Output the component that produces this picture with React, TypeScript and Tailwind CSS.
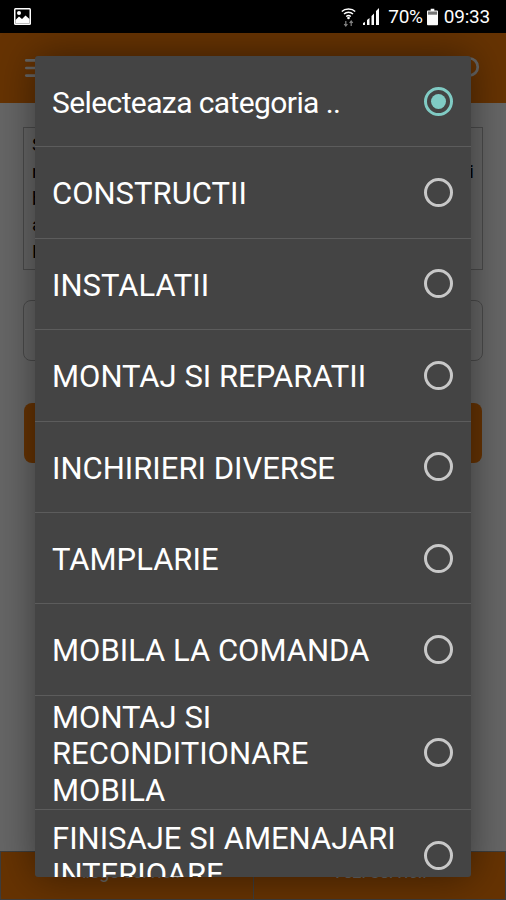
import React from "react";
import { Menu, Search } from "lucide-react";

const CATEGORIES = [
  "Selecteaza categoria ..",
  "CONSTRUCTII",
  "INSTALATII",
  "MONTAJ SI REPARATII",
  "INCHIRIERI DIVERSE",
  "TAMPLARIE",
  "MOBILA LA COMANDA",
  "MONTAJ SI RECONDITIONARE MOBILA",
  "FINISAJE SI AMENAJARI INTERIOARE",
];

// mostly hidden by the dialog, only the line starts show
const INTRO_LINES = [
  "Selecteaza categoria de servicii dorita",
  "necesare pentru a primi oferte de la meseriasi",
  "buni din zona ta pentru lucrarea",
  "ai nevoie acum si compara",
  "Preturile",
];

function StatusBar() {
  return (
    <div className="flex h-[33px] shrink-0 items-center justify-between bg-black pl-[14px] pr-[16px] text-white">
      <svg width="17" height="17" viewBox="0 0 17 17">
        <rect width="17" height="17" rx="1.5" fill="#fff" />
        <rect x="1.5" y="1.5" width="14" height="14" fill="#000" />
        <circle cx="5" cy="5" r="2" fill="#fff" />
        <path d="M1.5 15.5 V12 L5 8.5 L8 11 L11.5 7.5 L15.5 11 V15.5 Z" fill="#fff" />
      </svg>
      <div className="flex items-center text-[19px] leading-none">
        <svg width="15" height="20" viewBox="0 0 15 20" className="mr-[7px]">
          <path d="M0.8 4.5 C4 1.2 11 1.2 14.2 4.5 M3 7 C5.5 4.6 9.5 4.6 12 7 M5.2 9.5 C6.5 8.3 8.5 8.3 9.8 9.5" fill="none" stroke="#fff" strokeWidth="1.4" />
          <circle cx="7.5" cy="11" r="1.3" fill="#fff" />
          <path d="M4.8 14 V19 M3.2 17 L4.8 19 L6.4 17 M10.2 19 V14 M8.6 16 L10.2 14 L11.8 16" fill="none" stroke="#888" strokeWidth="1.2" />
        </svg>
        <svg width="16" height="17" viewBox="0 0 16 17" className="mr-[9px]">
          <path d="M0 17 V15 L2 14 V17 Z M4 17 V12 L6.5 10 V17 Z M8.5 17 V8 L11 5.5 V17 Z M13 17 V3 L16 0 V17 Z" fill="#fff" />
        </svg>
        <span className="tracking-[-0.3px]">70%</span>
        <svg width="11" height="18" viewBox="0 0 12 18" className="ml-[4px] mr-[6px]">
          <path d="M4 0 H8 V2 H11 Q12 2 12 3 V17 Q12 18 11 18 H1 Q0 18 0 17 V3 Q0 2 1 2 H4 Z" fill="#fff" />
          <rect x="1" y="3" width="10" height="3.5" fill="#777" />
        </svg>
        <span className="tracking-[-0.2px]">09:33</span>
      </div>
    </div>
  );
}

function PageBehind() {
  return (
    <div className="flex min-h-0 flex-1 flex-col bg-white">
      <div className="flex h-[70px] shrink-0 items-center justify-between bg-[#fe8008] pl-[22px] pr-[25px]">
        <Menu size={26} color="#fff" strokeWidth={2.5} />
        <Search size={26} color="#fff" strokeWidth={2.5} className="-scale-x-100" />
      </div>

      <div className="flex flex-1 flex-col px-[23px] pt-[24px]">
        <div className="h-[143px] border border-[#bbb] px-[8px] pt-[4px] text-[19px] leading-[26.8px] text-black">
          {INTRO_LINES.map((line, i) => (
            <div key={line} className={i === 1 ? "[text-align-last:justify]" : ""}>{line}</div>
          ))}
        </div>
        <div className="mt-[30px] h-[61px] rounded-[8px] border border-[#bbb]" />
        <div className="mx-[1px] mt-[42px] h-[60px] rounded-[8px] bg-[#fe8008]" />
      </div>

      <div className="flex h-[49px] shrink-0 border border-[#999] bg-[#fe8008] text-[18px] text-white">
        <div className="flex flex-1 items-center justify-center border-r border-[#999] pb-[9px]">Alege servicii</div>
        <div className="flex flex-1 items-center justify-center pb-[9px]">Vezi servicii</div>
      </div>
    </div>
  );
}

function Radio({ checked }: { checked: boolean }) {
  return (
    <span
      className={
        "flex h-[29px] w-[29px] shrink-0 items-center justify-center rounded-full border-[3px] " +
        (checked ? "border-[#80cbc4]" : "border-[#c8c8c8]")
      }
    >
      {checked && <span className="h-[15px] w-[15px] rounded-full bg-[#80cbc4]" />}
    </span>
  );
}

export default function App() {
  return (
    <div className="relative flex h-[900px] w-full flex-col overflow-hidden font-['Roboto',sans-serif]">
      <StatusBar />
      <PageBehind />

      <div className="absolute inset-x-0 bottom-0 top-[33px] flex items-center justify-center bg-black/60">
        <div className="h-[821px] w-[436px] overflow-hidden rounded-[3px] bg-[#444444] shadow-[0_0_40px_rgba(0,0,0,0.45)]">
          {CATEGORIES.map((name, i) => (
            <div
              key={name}
              className="flex min-h-[91.4px] items-center border-b border-[#5c5c5c] pl-[17px] pr-[18px]"
            >
              <span
                className={
                  "flex-1 pr-[14px] pt-[4px] leading-[36.5px] text-white " +
                  (i === 0 ? "text-[30px] tracking-[-0.6px]" : "text-[31px]")
                }
              >
                {name}
              </span>
              <Radio checked={i === 0} />
            </div>
          ))}
        </div>
      </div>
    </div>
  );
}
